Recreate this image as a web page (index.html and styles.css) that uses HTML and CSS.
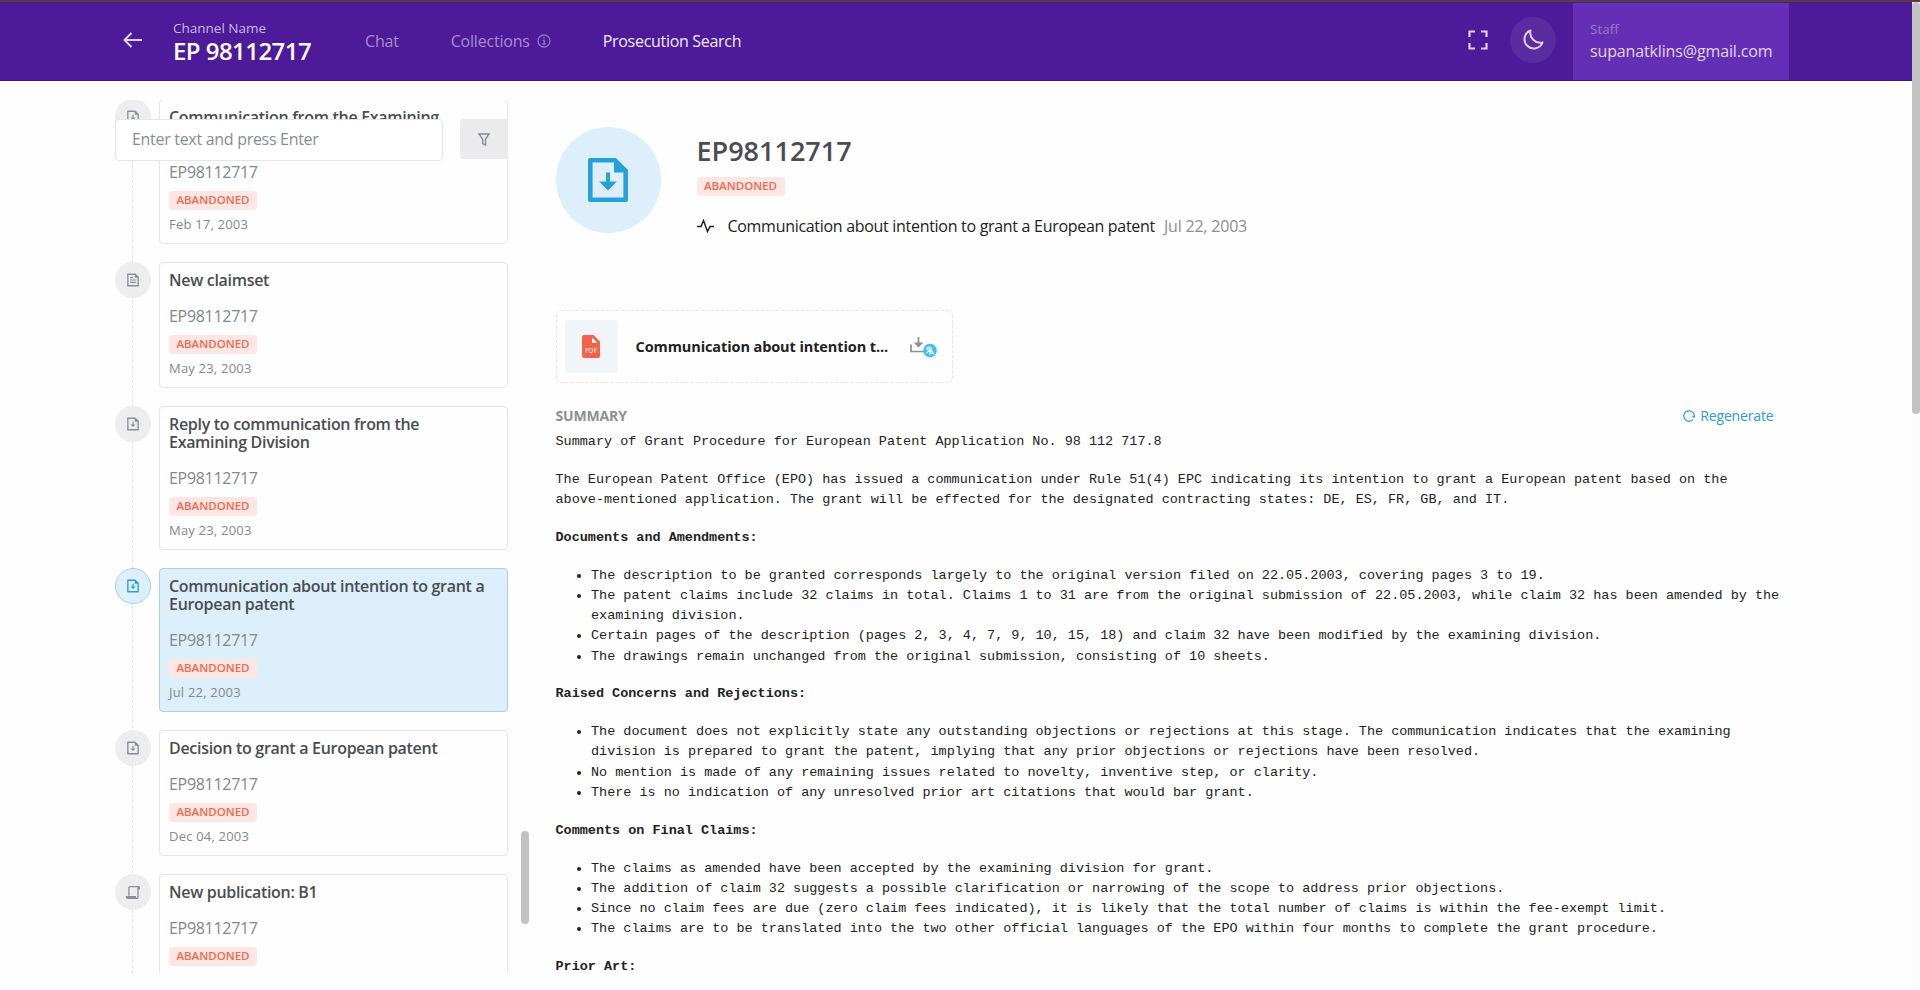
FILE: index.html
```html
<!DOCTYPE html>
<html lang="en">
<head>
<meta charset="utf-8">
<title>Prosecution Search</title>
<link rel="stylesheet" href="styles.css">
</head>
<body>
<svg class="defs" width="0" height="0">
  <symbol id="doc-down" viewBox="0 0 24 24"><path fill-rule="evenodd" d="M3 1h13l6 6v15c0 .6-.4 1-1 1H3c-.6 0-1-.4-1-1V2c0-.6.4-1 1-1zM4.300 3.300v17.400h15.400V8.200H15V3.300z"/><path d="M11 8.200h2v4.600h3.400L12 17.200l-4.400-4.400H11z"/></symbol>
  <symbol id="doc-text" viewBox="0 0 24 24"><path fill-rule="evenodd" d="M3 1h13l6 6v15c0 .6-.4 1-1 1H3c-.6 0-1-.4-1-1V2c0-.6.4-1 1-1zM4.300 3.300v17.400h15.400V8.200H15V3.300z"/><path d="M7 7h5v2H7zM7 11h10v2H7zM7 15h10v2H7z"/></symbol>
  <symbol id="scroll" viewBox="0 0 24 24"><path d="M5.500 17V4.500c0-1 .8-2 2-2h14.200c-1 .3-1.700 1-1.700 2.500V19c0 1.500-1 2.500-2.500 2.500H4c-1.500 0-2.500-1-2.500-3h14.300c0 1.500.5 3 1.700 3" fill="none" stroke="currentColor" stroke-width="2"/><path d="M1.500 17.500h14.500l1 4H4c-1.500 0-2.500-1.500-2.500-4zM20 2h3v5h-3z"/></symbol>
</svg>

<header class="topbar">
  <a class="back"><svg width="20" height="16" viewBox="0 0 20 16" fill="none" stroke="currentColor" stroke-width="2"><path d="M19 8H1.500M8.500 1l-7 7 7 7"/></svg></a>
  <div class="channel">
    <div class="channel-label">Channel Name</div>
    <div class="channel-name">EP 98112717</div>
  </div>
  <nav class="nav">
    <a>Chat</a>
    <a>Collections <svg class="info" width="14" height="14" viewBox="0 0 14 14" fill="none" stroke="currentColor" stroke-width="1.300"><circle cx="7" cy="7" r="6"/><path d="M5.700 6.300h1.500V10M5.300 10h3.500M7 3.300v1.400"/></svg></a>
    <a class="active">Prosecution Search</a>
  </nav>
  <div class="tools">
    <svg class="expand" width="20" height="20" viewBox="0 0 20 20" fill="none" stroke="currentColor" stroke-width="2.200"><path d="M1.500 7V1.500H7M13 1.500h5.500V7M18.500 13v5.500H13M7 18.500H1.500V13"/></svg>
    <span class="moon"><svg width="22" height="22" viewBox="0 0 22 22" fill="none" stroke="currentColor" stroke-width="2" stroke-linejoin="round"><path d="M8.500 1.500a9.300 9.300 0 1 0 12 12A10 10 0 0 1 8.500 1.500z"/></svg></span>
  </div>
  <div class="user">
    <div class="user-role">Staff</div>
    <div class="user-mail">supanatklins@gmail.com</div>
  </div>
</header>

<div class="page">
  <aside class="sidebar">
    <div class="search">
      <div class="search-input">Enter text and press Enter</div>
      <div class="filter"><svg width="12" height="13" viewBox="0 0 12 13" fill="none" stroke="currentColor" stroke-width="1.400"><path d="M1 1h10L7.500 6.200V12L4.600 10.500V6.200z"/></svg></div>
    </div>
    <div class="timeline">
      <div class="event">
        <span class="dot"><svg width="14" height="14"><use href="#doc-down"/></svg></span>
        <div class="card"><div class="title">Communication from the Examining Division</div><div class="num">EP98112717</div><span class="badge">ABANDONED</span><div class="date">Feb 17, 2003</div></div>
      </div>
      <div class="event">
        <span class="dot"><svg width="14" height="14"><use href="#doc-text"/></svg></span>
        <div class="card"><div class="title">New claimset</div><div class="num">EP98112717</div><span class="badge">ABANDONED</span><div class="date">May 23, 2003</div></div>
      </div>
      <div class="event">
        <span class="dot"><svg width="14" height="14"><use href="#doc-down"/></svg></span>
        <div class="card"><div class="title">Reply to communication from the Examining Division</div><div class="num">EP98112717</div><span class="badge">ABANDONED</span><div class="date">May 23, 2003</div></div>
      </div>
      <div class="event selected">
        <span class="dot"><svg width="14" height="14"><use href="#doc-down"/></svg></span>
        <div class="card"><div class="title">Communication about intention to grant a European patent</div><div class="num">EP98112717</div><span class="badge">ABANDONED</span><div class="date">Jul 22, 2003</div></div>
      </div>
      <div class="event">
        <span class="dot"><svg width="14" height="14"><use href="#doc-down"/></svg></span>
        <div class="card"><div class="title">Decision to grant a European patent</div><div class="num">EP98112717</div><span class="badge">ABANDONED</span><div class="date">Dec 04, 2003</div></div>
      </div>
      <div class="event">
        <span class="dot"><svg width="16" height="15"><use href="#scroll"/></svg></span>
        <div class="card last"><div class="title">New publication: B1</div><div class="num">EP98112717</div><span class="badge">ABANDONED</span></div>
      </div>
    </div>
    <span class="side-thumb"></span>
  </aside>

  <main class="detail">
    <div class="hero">
      <span class="hero-icon"><svg width="48" height="48"><use href="#doc-down"/></svg></span>
      <div class="hero-text">
        <h1>EP98112717</h1>
        <span class="badge">ABANDONED</span>
        <div class="status"><svg width="17" height="14" viewBox="0 0 17 14" fill="none" stroke="currentColor" stroke-width="1.500"><path d="M0 7.500h4L6.500 1.500 10.500 12.500 13 7.500h4"/></svg><span>Communication about intention to grant a European patent</span><time>Jul 22, 2003</time></div>
      </div>
    </div>

    <div class="file">
      <span class="file-thumb"><svg width="18" height="23" viewBox="0 0 18 23"><path fill="#f1634a" d="M2 0h9.500L18 6.500V21a2 2 0 0 1-2 2H2a2 2 0 0 1-2-2V2a2 2 0 0 1 2-2z"/><path fill="#fff" d="M10 2.500v5.300h5.300z"/><text class="pdf" x="9" y="18" text-anchor="middle">PDF</text></svg></span>
      <span class="file-name">Communication about intention t...</span>
      <span class="download"><svg width="28" height="22" viewBox="0 0 28 22"><path d="M2 8.500v7h14M9.500 1v6" fill="none" stroke="#8b8f94" stroke-width="1.700"/><path fill="#8b8f94" d="M4.800 6.500h9.400L9.500 11.500z"/><circle cx="21" cy="14.500" r="6.800" fill="#3cc3f2"/><path d="M17 12h6M20 10.500V12M22 12c-.8 2.500-2.500 4-4.500 5M18 12c.7 2 2 3 3 3.500M20.300 18.500l2.200-4.500 2.200 4.500M21 17.200h3" fill="none" stroke="#fff" stroke-width="1.100"/></svg></span>
    </div>

    <div class="summary-head"><span>SUMMARY</span><a><svg width="12" height="12" viewBox="0 0 12 12" fill="none" stroke="currentColor" stroke-width="1.200"><path d="M7.600 10.950A5.200 5.200 0 1 1 11.200 6.500M9.400 6.200l1.800.9.600-2"/><path d="M7.600 10.950A5.200 5.200 0 0 0 10 9.300"/></svg>Regenerate</a></div>

    <div class="summary">
      <p>Summary of Grant Procedure for European Patent Application No. 98 112 717.8</p>
      <p>The European Patent Office (EPO) has issued a communication under Rule 51(4) EPC indicating its intention to grant a European patent based on the above-mentioned application. The grant will be effected for the designated contracting states: DE, ES, FR, GB, and IT.</p>
      <p><strong>Documents and Amendments:</strong></p>
      <ul>
        <li>The description to be granted corresponds largely to the original version filed on 22.05.2003, covering pages 3 to 19.</li>
        <li>The patent claims include 32 claims in total. Claims 1 to 31 are from the original submission of 22.05.2003, while claim 32 has been amended by the examining division.</li>
        <li>Certain pages of the description (pages 2, 3, 4, 7, 9, 10, 15, 18) and claim 32 have been modified by the examining division.</li>
        <li>The drawings remain unchanged from the original submission, consisting of 10 sheets.</li>
      </ul>
      <p><strong>Raised Concerns and Rejections:</strong></p>
      <ul>
        <li>The document does not explicitly state any outstanding objections or rejections at this stage. The communication indicates that the examining division is prepared to grant the patent, implying that any prior objections or rejections have been resolved.</li>
        <li>No mention is made of any remaining issues related to novelty, inventive step, or clarity.</li>
        <li>There is no indication of any unresolved prior art citations that would bar grant.</li>
      </ul>
      <p><strong>Comments on Final Claims:</strong></p>
      <ul>
        <li>The claims as amended have been accepted by the examining division for grant.</li>
        <li>The addition of claim 32 suggests a possible clarification or narrowing of the scope to address prior objections.</li>
        <li>Since no claim fees are due (zero claim fees indicated), it is likely that the total number of claims is within the fee-exempt limit.</li>
        <li>The claims are to be translated into the two other official languages of the EPO within four months to complete the grant procedure.</li>
      </ul>
      <p><strong>Prior Art:</strong></p>
    </div>
  </main>
</div>
<div class="page-scroll"><span class="page-thumb"></span></div>
</body>
</html>
```

FILE: styles.css
```css
* { box-sizing: border-box; }
body { margin: 0; height: 990px; overflow: hidden; position: relative; background: #fefefe; color: #222; font-family: "Open Sans", "Noto Sans", sans-serif; font-size: 16px; }
svg { display: block; fill: currentColor; }
svg[fill="none"] { fill: none; }
.defs { position: absolute; }

.topbar { height: 81px; border-top: 2px solid #573c40; border-bottom: 1px solid #42167f; padding: 0 131px 0 123px; background: #4d1a99; display: flex; align-items: stretch; }
.back { width: 50px; padding-top: 30px; color: #ddd1ec; }
.channel { width: 192px; padding-top: 17px; }
.channel-label { font-size: 13.500px; line-height: 18px; color: #c9b8e2; }
.channel-name { font-size: 24px; line-height: 28px; font-weight: 600; color: #fff; letter-spacing: -.55px; }
.nav { display: flex; gap: 52px; flex: 1; font-size: 16px; line-height: 24px; padding-top: 27px; color: #a78dcc; letter-spacing: -.2px; }
.nav a { display: flex; align-items: center; gap: 7px; height: 24px; }
.nav .active { color: #f1eaf9; letter-spacing: -.3px; }
.info { opacity: .8; }
.tools { display: flex; gap: 22px; padding: 15px 17px 0 0; color: #ddd1ec; }
.expand { margin-top: 13px; }
.moon { width: 46px; height: 46px; border-radius: 50%; background: #5a2c9f; display: grid; place-items: center; }
.user { width: 216px; margin-top: 1px; padding: 17px 0 0 17px; background: #642fb5; }
.user-role { font-size: 13.500px; line-height: 18px; color: #977dbd; }
.user-mail { font-size: 16px; line-height: 26px; color: #e2d6f2; letter-spacing: -.14px; }

.page { display: flex; padding: 19px 0 0 115px; height: 909px; }
.sidebar { position: relative; width: 440.500px; flex: none; }
.timeline { position: relative; width: 393px; height: 873px; overflow: hidden; display: flex; flex-direction: column; gap: 18px; }
.timeline::before { content: ""; position: absolute; left: 17px; top: 0; height: 100%; border-left: 1px dashed #e2e2e5; }
.event { position: relative; display: flex; gap: 8px; align-items: flex-start; flex: none; }
.event:first-child { margin-top: -1px; }
.event:first-child .title { margin-bottom: 16px; }
.dot { width: 36px; height: 36px; border-radius: 50%; background: #ededef; color: #8a8d96; display: grid; place-items: center; flex: none; }
.card { width: 349px; border: 1px solid #e4e5e8; border-radius: 4px; padding: 8px 9px 10px; }
.last { height: 126px; }
.title { font-size: 16px; line-height: 18px; font-weight: 600; color: #4a4d50; margin-bottom: 15px; letter-spacing: -.3px; }
.num { font-size: 16px; line-height: 24px; color: #84878b; font-weight: 500; margin-bottom: 7px; letter-spacing: -.3px; }
.badge { display: block; width: 88px; height: 19px; border-radius: 4px; background: #fde6e3; color: #ec6b51; font-size: 11.500px; line-height: 18px; font-weight: 600; text-align: center; }
.date { font-size: 13px; line-height: 18px; color: #85888c; margin-top: 5px; letter-spacing: .2px; }
.selected .card { background: #dceffa; border-color: #a3d2ea; }
.selected .dot { background: #dceffa; border: 1px solid #a3d2ea; color: #26a0da; }
.search { position: absolute; z-index: 1; left: 0; top: 19px; width: 393px; display: flex; justify-content: space-between; }
.search-input { width: 328px; height: 42px; border: 1px solid #e4e5e8; border-radius: 4px; background: #fff; padding: 0 16px; line-height: 39px; color: #888c99; letter-spacing: -.3px; }
.filter { width: 48px; height: 40px; border-radius: 4px 0 0 4px; background: #ebebed; color: #858a95; display: grid; place-items: center; }
.side-thumb { position: absolute; left: 406px; top: 731px; width: 8px; height: 93px; border-radius: 4px; background: #c2c2c2; }

.detail { width: 1226px; padding-top: 27px; }
.hero { display: flex; gap: 36px; height: 183px; }
.hero-icon { width: 105px; height: 106px; border-radius: 50%; background: #dceffa; color: #26a0da; display: grid; place-items: center; flex: none; }
.hero-text h1 { margin: 6px 0 8px; font-size: 27px; line-height: 36px; font-weight: 600; color: #4a4d50; }
.status { display: flex; align-items: center; margin-top: 18px; line-height: 24px; letter-spacing: -.3px; }
.status span { margin-left: 14px; }
.status time { margin-left: 9px; color: #8b8e92; letter-spacing: -.2px; }
.file { width: 397px; height: 73px; border: 1px dashed #dfe2e6; border-radius: 5px; display: flex; align-items: center; padding: 0 0 0 8px; }
.file-thumb { width: 53px; height: 53px; background: #f1f5f8; border-radius: 3px; display: grid; place-items: center; flex: none; }
.pdf { font-size: 6.500px; font-weight: 600; fill: #ffd9cf; }
.file-name { width: 291px; flex: none; padding-left: 18px; font-size: 14.500px; font-weight: 700; white-space: nowrap; letter-spacing: -.1px; }
.download { width: 28px; flex: none; }
.summary-head { display: flex; justify-content: space-between; padding: 21px 8px 0 0; line-height: 24px; font-size: 14px; color: #8c8f93; font-weight: 700; letter-spacing: -.15px; }
.summary-head a { display: flex; align-items: center; gap: 5px; color: #2a9ad5; font-weight: 500; }
.summary { font: 13.470px/20.200px "Liberation Mono", monospace; color: #222; padding-top: 4px; }
.summary p, .summary ul { margin: 0 0 17.650px; }
.summary ul { padding-left: 35.500px; }

.page-scroll { position: absolute; right: 0; top: 2px; width: 8px; height: 988px; background: #fcfcfc; }
.page-thumb { display: block; width: 8px; height: 412px; border-radius: 4px; background: #c2c2c2; }
```
